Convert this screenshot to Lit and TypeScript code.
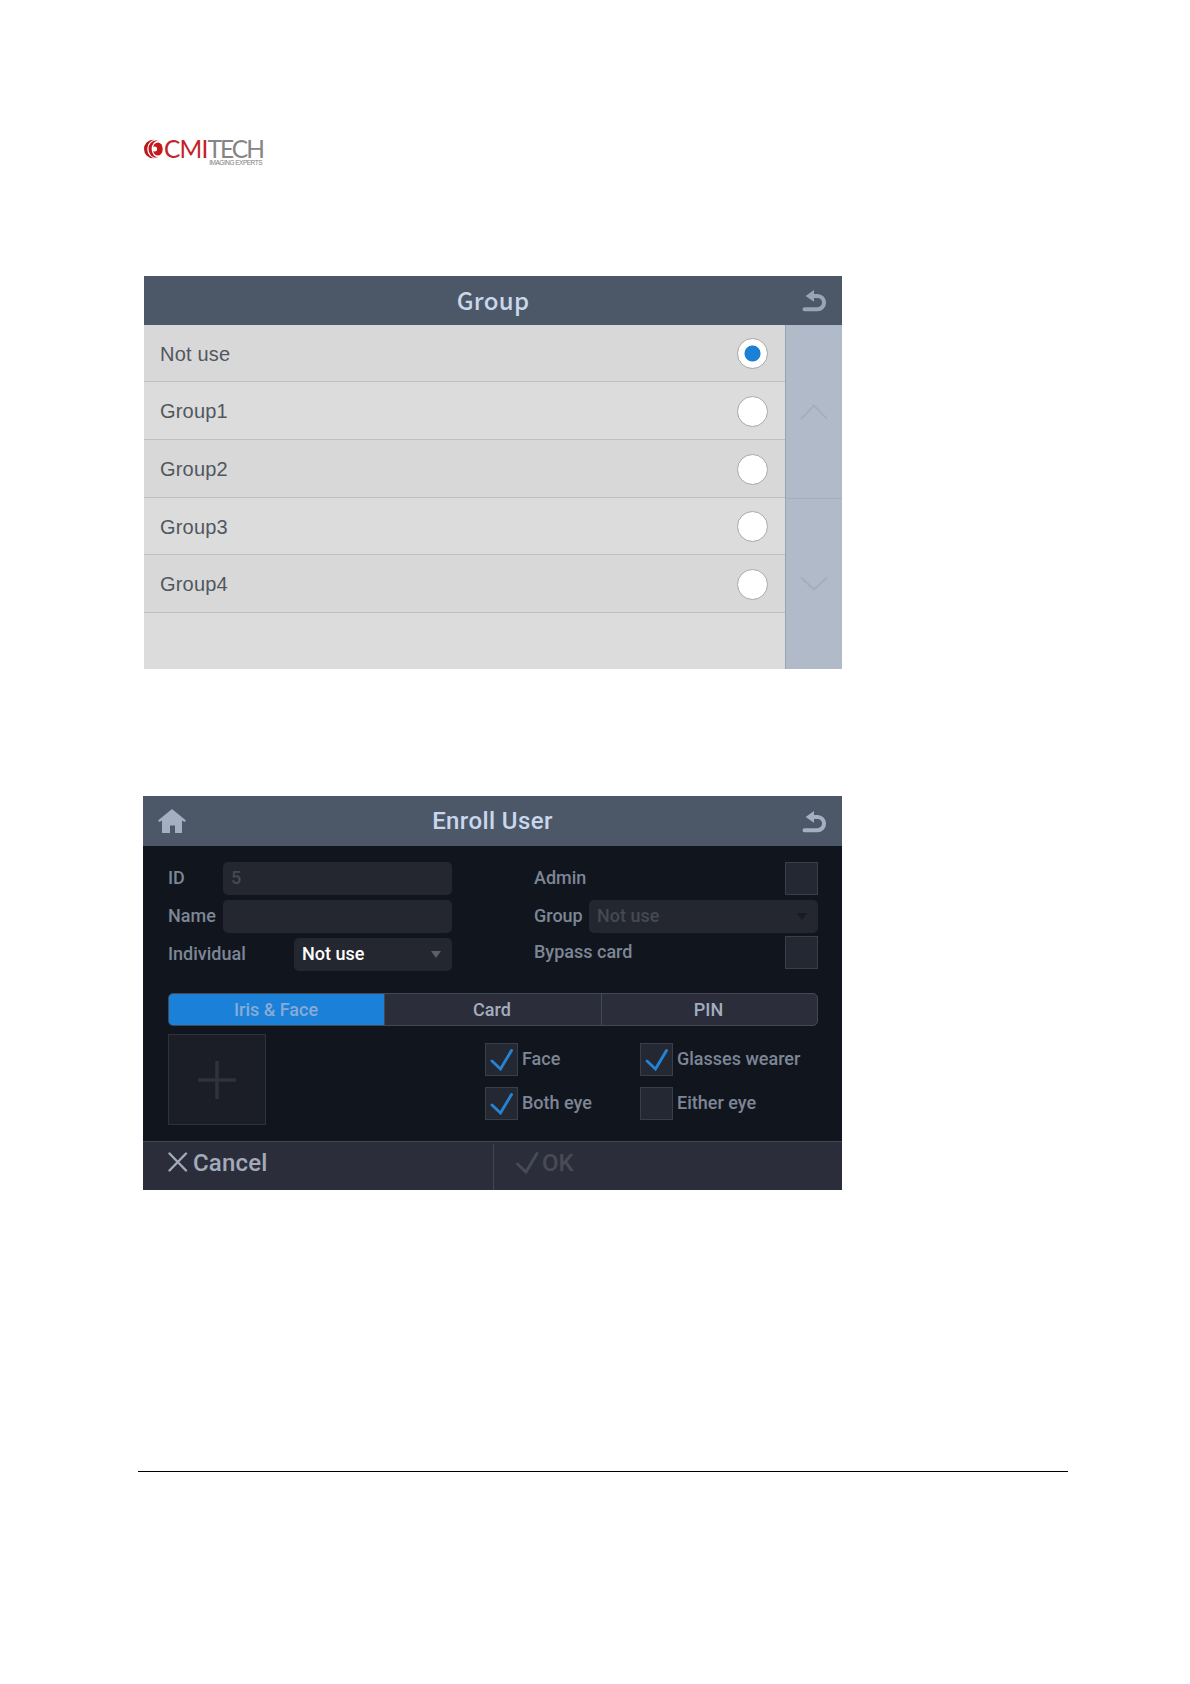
import { LitElement, css, html, svg } from 'lit'
import { customElement, property, state } from 'lit/decorators.js'
import { classMap } from 'lit/directives/class-map.js'

const backIcon = html`
  <svg class="back" width="26" height="26" viewBox="0 0 26 26">
    <path d="M3.5 21.2H16.500a6.6 6.6 0 0 0 0-13.2h-5" fill="none" stroke="currentColor" stroke-width="4" stroke-linecap="round" />
    <path d="M4.6 7.900 13 2v11.800z" fill="currentColor" />
  </svg>
`

const checkPath = svg`<path d="M6.500 17.500 15 25.500 26 7" fill="none" stroke="currentColor" stroke-width="2.900" stroke-linecap="round" />`


@customElement('brand-logo')
export class BrandLogo extends LitElement {
  render() {
    return html`
      <svg class="mark" width="19" height="20" viewBox="0 0 19 20">
        <ellipse cx="9" cy="10" rx="9" ry="9.300" fill="#b5191f" />
        <ellipse cx="12.200" cy="10" rx="9" ry="9.500" fill="#fff" />
        <ellipse cx="12.300" cy="10" rx="7.800" ry="8.700" fill="#c01a20" />
        <ellipse cx="15.400" cy="10" rx="7.800" ry="8.900" fill="#fff" />
        <ellipse cx="13.800" cy="10" rx="4.900" ry="6.600" fill="#c4181f" />
        <ellipse cx="10.600" cy="10" rx="2.500" ry="2.500" fill="#fff" />
      </svg>
      <div class="words">
        <div class="name"><span class="red">CMI</span>TECH</div>
        <div class="tag">IMAGING EXPERTS</div>
      </div>
    `
  }

  static styles = css`
    :host {
      display: flex;
      gap: 1px;
      width: 120px;
      height: 30px;
    }
    .mark {
      margin-top: 1px;
    }
    .words {
      width: 98px;
    }
    .name {
      padding-top: 1px;
      font: 400 24.5px/20px Lato, sans-serif;
      letter-spacing: -2px;
      color: #858585;
      white-space: nowrap;
    }
    .red {
      letter-spacing: -0.8px;
      color: #c2222a;
    }
    .tag {
      font: 400 6.5px/7px "Liberation Sans", sans-serif;
      letter-spacing: -0.5px;
      text-align: right;
      color: #7c7c7c;
      white-space: nowrap;
    }
  `
}


@customElement('group-screen')
export class GroupScreen extends LitElement {
  @state() options = ['Not use', 'Group1', 'Group2', 'Group3', 'Group4']
  @state() selected = 'Not use'

  render() {
    return html`
      <header class="bar">
        <span></span>
        <h1 class="title">Group</h1>
        ${backIcon}
      </header>
      <div class="content">
        <div class="list">
          ${this.options.map(option => html`
            <div class="row" @click=${() => { this.selected = option }}>
              <span class="text">${option}</span>
              <span class=${classMap({ radio: true, on: option === this.selected })}></span>
            </div>
          `)}
          <div class="rest"></div>
        </div>
        <div class="scroll">
          <div class="arrow">
            <svg width="28" height="16" viewBox="0 0 28 16"><path d="M1 15 14 1.500 27 15" fill="none" stroke="#a4adbc" stroke-width="1.800" /></svg>
          </div>
          <div class="arrow down">
            <svg width="28" height="16" viewBox="0 0 28 16"><path d="M1 1.500 14 13.500 27 1.500" fill="none" stroke="#a4adbc" stroke-width="1.800" /></svg>
          </div>
        </div>
      </div>
    `
  }

  static styles = css`
    :host {
      display: block;
      width: 698px;
      height: 393px;
      font-family: "Liberation Sans", sans-serif;
    }
    .bar {
      display: grid;
      grid-template-columns: 60px 1fr 60px;
      align-items: center;
      height: 49px;
      background: #4c5868;
      color: #99a5b5;
    }
    .title {
      margin: 0;
      padding-bottom: 2px;
      font: 500 24px/47px "Noto Sans CJK SC", sans-serif;
      letter-spacing: 0.3px;
      text-align: center;
      color: #c9d7ec;
    }
    .back {
      justify-self: end;
      margin-right: 15px;
    }
    .content {
      display: grid;
      grid-template-columns: 641px 57px;
      height: 344px;
    }
    .list {
      display: grid;
      grid-template-rows: 57px 58px 58px 57px 58px 56px;
    }
    .row {
      display: flex;
      align-items: center;
      justify-content: space-between;
      box-sizing: border-box;
      padding: 1px 17px 0 16px;
      border-bottom: 1px solid #bdc0c3;
      background: #d8d8d8;
    }
    .row:nth-child(even), .rest {
      background: #dcdcdc;
    }
    .text {
      padding-top: 1px;
      font-size: 20px;
      letter-spacing: 0.2px;
      color: #50575f;
    }
    .radio {
      box-sizing: border-box;
      width: 31px;
      height: 31px;
      border: 1px solid #a9a9a9;
      border-radius: 50%;
      background: #fff;
    }
    .radio.on {
      background: radial-gradient(circle, #1c80d6 7.600px, #fff 8.400px);
    }
    .scroll {
      display: grid;
      grid-template-rows: 173px 171px;
      border-left: 1px solid #97a3b2;
      background: #b0bac8;
    }
    .arrow {
      display: flex;
      align-items: center;
      justify-content: center;
      box-sizing: border-box;
    }
    .arrow svg {
      display: block;
    }
    .down {
      border-top: 1px solid #a2aebd;
    }
  `
}


@customElement('check-box')
export class CheckBox extends LitElement {
  @property({ type: Boolean }) checked = false

  render() {
    return html`
      <div class="box">
        ${this.checked ? html`<svg width="31" height="31" viewBox="0.5 0.5 31 31">${checkPath}</svg>` : ''}
      </div>
    `
  }

  static styles = css`
    :host {
      display: block;
      width: 33px;
      height: 33px;
    }
    .box {
      display: grid;
      place-items: center;
      box-sizing: border-box;
      width: 33px;
      height: 33px;
      border: 1px solid #3a3e48;
      background: #242832;
      color: #2583d3;
    }
  `
}


@customElement('enroll-screen')
export class EnrollScreen extends LitElement {
  @state() tabs = ['Iris & Face', 'Card', 'PIN']
  @state() tab = 'Iris & Face'
  @state() checks = [
    { label: 'Face', checked: true },
    { label: 'Glasses wearer', checked: true },
    { label: 'Both eye', checked: true },
    { label: 'Either eye', checked: false },
  ]

  render() {
    return html`
      <header class="bar">
        <svg class="home" width="28" height="25" viewBox="0 0 28 25">
          <path d="M14 0 28 11.500 26.500 13 24 11.500V24H17V16.500H12V24H4V11.500L1.500 13 0 11.500z" fill="currentColor" />
        </svg>
        <h1 class="title">Enroll User</h1>
        ${backIcon}
      </header>

      <div class="body">
        <div class="form">
          <div class="column">
            <div class="field"><span>ID</span><div class="input dim">5</div></div>
            <div class="field"><span>Name</span><div class="input"></div></div>
            <div class="field"><span>Individual</span>
              <div class="input short">Not use<i class="caret"></i></div>
            </div>
          </div>
          <div class="column">
            <div class="field"><span>Admin</span><check-box></check-box></div>
            <div class="field"><span>Group</span>
              <div class="input dim">Not use<i class="caret dark"></i></div>
            </div>
            <div class="field bypass"><span>Bypass card</span><check-box></check-box></div>
          </div>
        </div>

        <div class="tabs">
          ${this.tabs.map(name => html`
            <div class=${classMap({ tab: true, active: name === this.tab })} @click=${() => { this.tab = name }}>${name}</div>
          `)}
        </div>

        <div class="capture">
          <div class="add">
            <svg width="38" height="38" viewBox="0 0 38 38"><path d="M19 1V37M1 19H37" stroke="#2f313b" stroke-width="3.600" stroke-linecap="round" /></svg>
          </div>
          <div class="checks">
            ${this.checks.map(item => html`
              <div class="check"><check-box ?checked=${item.checked}></check-box><span>${item.label}</span></div>
            `)}
          </div>
        </div>
      </div>

      <footer class="actions">
        <div class="action cancel">
          <svg width="20" height="20" viewBox="0 0 20 20"><path d="M1.500 1.500 18 18.500M18 1.500 1.500 18.500" stroke="currentColor" stroke-width="2.400" stroke-linecap="round" /></svg>
          <span>Cancel</span>
        </div>
        <div class="action ok">
          <svg width="23" height="22" viewBox="5 5.500 23 22">${checkPath}</svg>
          <span>OK</span>
        </div>
      </footer>
    `
  }

  static styles = css`
    :host {
      display: block;
      width: 699px;
      height: 394px;
      background: #11151e;
      font: 500 18px/31px Roboto, sans-serif;
      color: #7d8695;
    }
    .bar {
      display: grid;
      grid-template-columns: 60px 1fr 60px;
      align-items: center;
      height: 50px;
      background: #4c5868;
      color: #a4b0c2;
    }
    .home {
      margin-left: 15px;
    }
    .title {
      margin: 0;
      font: 500 24px/48px Roboto, sans-serif;
      letter-spacing: 0.4px;
      text-align: center;
      color: #c9d7ec;
    }
    .back {
      justify-self: end;
      margin: 1px 15px 0 0;
    }
    .body {
      box-sizing: border-box;
      height: 295px;
      padding: 16px 24px 0 25px;
    }
    .form {
      display: grid;
      grid-template-columns: 284px 284px;
      justify-content: space-between;
      height: 131px;
    }
    .column {
      display: flex;
      flex-direction: column;
      gap: 5px;
    }
    .field {
      display: flex;
      justify-content: space-between;
      height: 33px;
    }
    .bypass {
      margin-top: -2px;
    }
    .input {
      display: flex;
      align-items: center;
      justify-content: space-between;
      box-sizing: border-box;
      width: 229px;
      height: 33px;
      padding: 0 11px 2px 8px;
      border-radius: 5px;
      background: #242730;
      color: #fff;
    }
    .short {
      width: 158px;
    }
    .dim {
      color: #454953;
    }
    .caret {
      margin-top: 1px;
      border: 5px solid transparent;
      border-top: 7px solid #5a5f69;
      border-bottom: 0;
    }
    .dark {
      border-top-color: #181b22;
    }
    .tabs {
      display: grid;
      grid-template-columns: 215px 217px 216px;
      box-sizing: border-box;
      height: 33px;
      border: 1px solid #434854;
      border-radius: 5px;
      overflow: hidden;
      background: #2b2e3a;
      line-height: 31px;
      text-align: center;
      color: #a3adbd;
    }
    .tab + .tab {
      padding-right: 2px;
      border-left: 1px solid #434854;
    }
    .active {
      margin: -1px 0 -1px -1px;
      background: #1b80d7;
      line-height: 33px;
      color: #87abd6;
    }
    .capture {
      display: flex;
      justify-content: space-between;
      padding-top: 8px;
    }
    .add {
      display: grid;
      place-items: center;
      box-sizing: border-box;
      width: 98px;
      height: 91px;
      border: 1px solid #2f323b;
      background: #1b1d27;
    }
    .checks {
      display: grid;
      grid-template-columns: 155px 178px;
      grid-auto-rows: 33px;
      row-gap: 11px;
      padding-top: 9px;
    }
    .check {
      display: flex;
      gap: 4px;
      line-height: 32px;
      white-space: nowrap;
    }
    .actions {
      display: grid;
      grid-template-columns: 350px 349px;
      box-sizing: border-box;
      height: 49px;
      border-top: 1px solid #434650;
      background: #2b2e3a;
      font-size: 24px;
      line-height: 43px;
    }
    .action {
      display: flex;
      gap: 5px;
    }
    .cancel {
      padding-left: 25px;
      letter-spacing: 0.2px;
      color: #a3abbb;
    }
    .cancel svg {
      margin-top: 10px;
    }
    .ok {
      gap: 3px;
      margin-top: 2px;
      padding-left: 22px;
      border-left: 1px solid #434650;
      line-height: 39px;
      color: #484b56;
    }
    .ok svg {
      margin-top: 8px;
    }
  `
}


@customElement('app-root')
export class AppRoot extends LitElement {
  render() {
    return html`
      <brand-logo class="logo"></brand-logo>
      <group-screen class="group"></group-screen>
      <enroll-screen class="enroll"></enroll-screen>
      <div class="line"></div>
    `
  }

  static styles = css`
    :host {
      display: flex;
      flex-direction: column;
      box-sizing: border-box;
      height: 1684px;
      padding: 138px 122px 0 138px;
      background: #fff;
    }
    .logo {
      margin-left: 6px;
    }
    .group {
      margin: 108px 0 0 6px;
    }
    .enroll {
      margin: 127px 0 0 5px;
    }
    .line {
      height: 1px;
      margin-top: 281px;
      background: #000;
    }
  `
}
